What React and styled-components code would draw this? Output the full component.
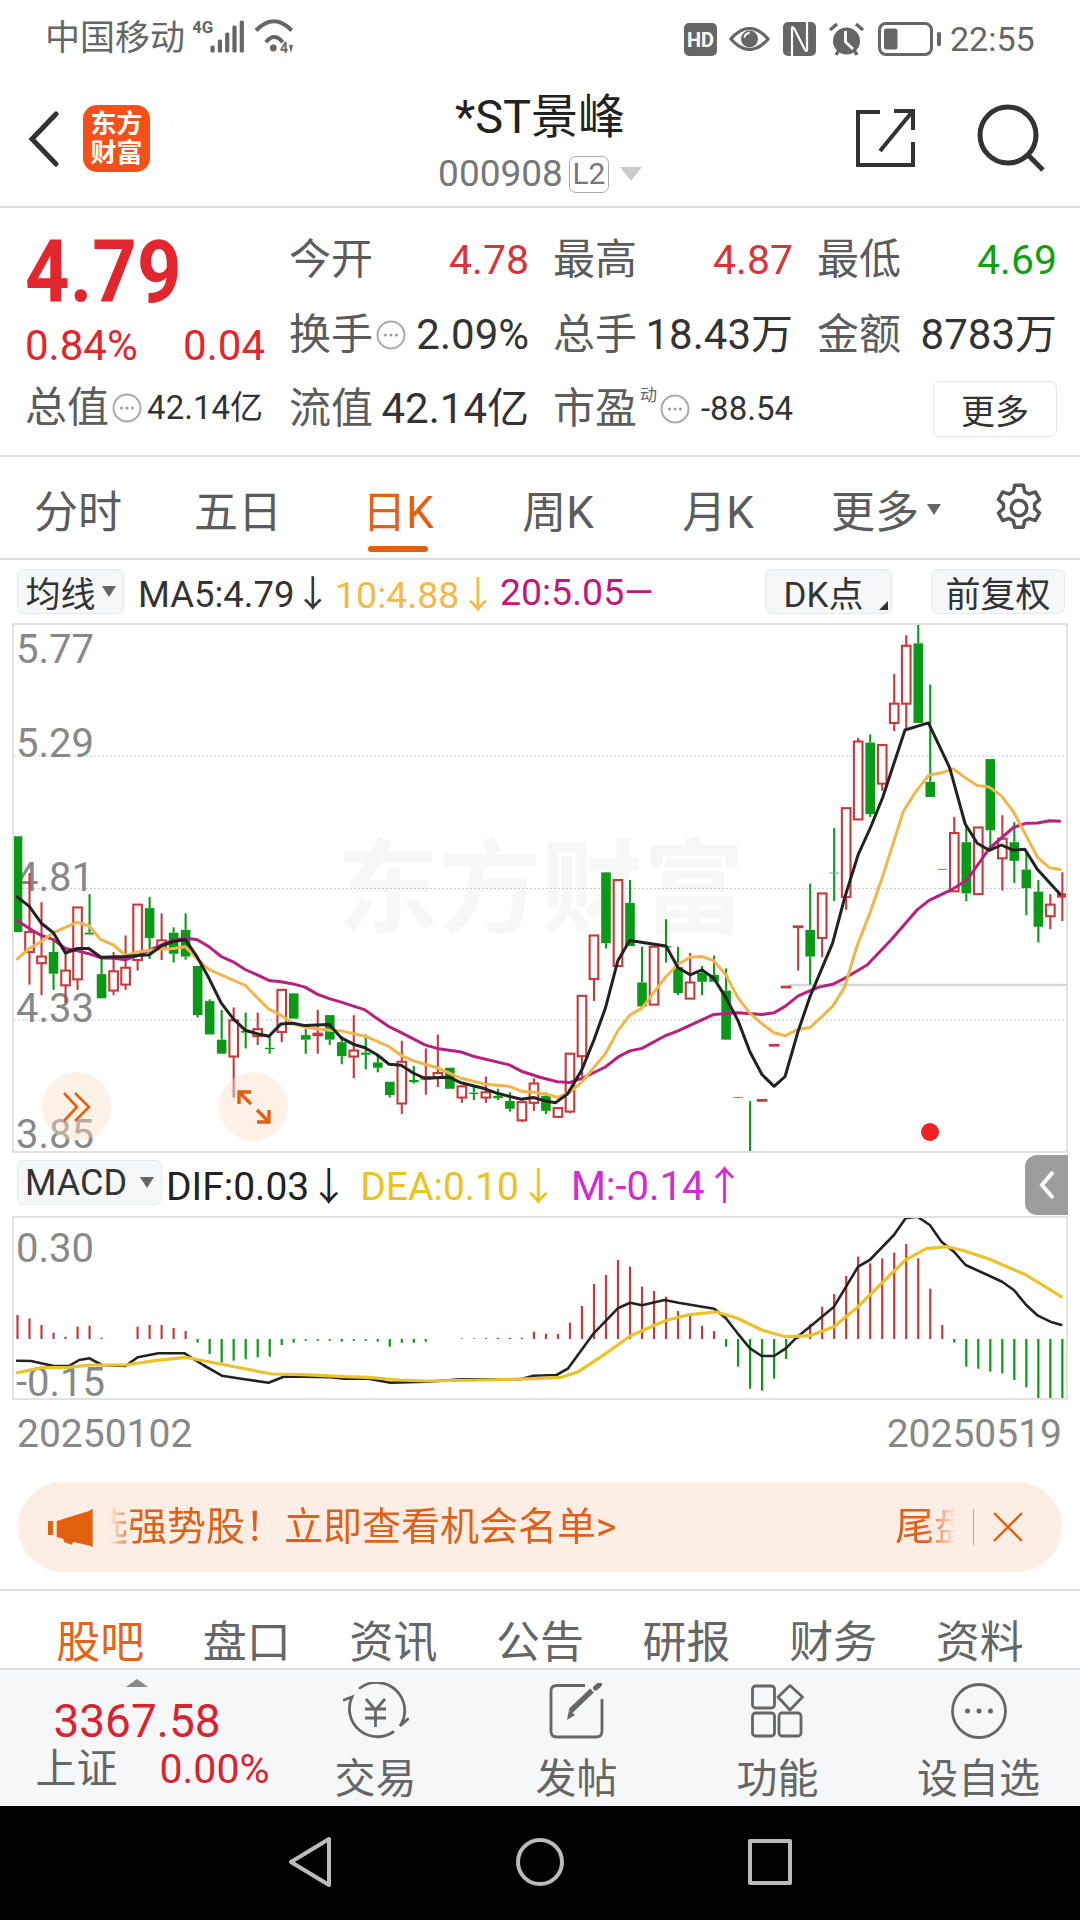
import styled, { createGlobalStyle } from "styled-components";

const GlobalStyle = createGlobalStyle`
  html, body {
    margin: 0;
    padding: 0;
    background: #fff;
  }
  * {
    box-sizing: border-box;
  }
`;

const FONT = `Roboto, "Noto Sans CJK SC", sans-serif`;
const RED = "#e1262d";
const ORANGE = "#e3600f";
const UP = "#c53b3b";
const DOWN = "#0a9a17";

// [high, bodyTop, bodyBottom, low, up?] measured from the reference, in crop units
const CANDLES = [
  [645, 645, 918, 918, 0], [750, 918, 975, 1068, 1], [833, 988, 1007, 1098, 1], [940, 975, 1037, 1083, 0],
  [970, 1028, 1070, 1120, 1], [848, 848, 1053, 1083, 1], [810, 920, 925, 925, 0], [995, 1038, 1107, 1107, 0],
  [975, 1030, 1085, 1098, 1], [928, 1020, 1068, 1083, 1], [840, 840, 998, 1028, 1], [818, 850, 935, 995, 0],
  [865, 942, 965, 998, 1], [905, 920, 980, 1005, 0], [865, 912, 988, 997, 0], [1015, 1015, 1155, 1162, 0],
  [1110, 1115, 1210, 1210, 0], [1140, 1225, 1265, 1265, 0], [1133, 1170, 1273, 1390, 1], [1148, 1200, 1205, 1250, 0],
  [1148, 1195, 1215, 1240, 1], [1215, 1248, 1252, 1265, 0], [1083, 1083, 1203, 1232, 1], [1093, 1093, 1165, 1165, 0],
  [1195, 1212, 1225, 1265, 0], [1140, 1208, 1212, 1265, 1], [1155, 1155, 1225, 1240, 0], [1215, 1232, 1272, 1295, 0],
  [1155, 1256, 1273, 1335, 1], [1210, 1262, 1268, 1310, 0], [1270, 1290, 1305, 1318, 0], [1345, 1345, 1383, 1390, 0],
  [1228, 1288, 1407, 1437, 1], [1300, 1340, 1346, 1350, 0], [1250, 1332, 1336, 1382, 1], [1210, 1320, 1332, 1360, 1],
  [1305, 1305, 1365, 1365, 0], [1358, 1358, 1390, 1405, 1], [1360, 1376, 1380, 1397, 0], [1330, 1375, 1390, 1405, 1],
  [1365, 1385, 1392, 1397, 0], [1375, 1400, 1422, 1430, 0], [1403, 1403, 1455, 1460, 1], [1335, 1350, 1405, 1428, 1],
  [1375, 1385, 1428, 1437, 0], [1420, 1420, 1445, 1445, 1], [1265, 1265, 1430, 1435, 1], [1100, 1100, 1272, 1330, 1],
  [928, 928, 1052, 1115, 1], [748, 748, 950, 965, 0], [770, 770, 1015, 1015, 1], [770, 835, 958, 958, 0],
  [960, 1062, 1130, 1138, 0], [960, 960, 1125, 1125, 1], [882, 958, 962, 1005, 0], [960, 1018, 1092, 1098, 0],
  [978, 1062, 1108, 1108, 1], [1015, 1035, 1060, 1098, 0], [985, 1040, 1060, 1060, 0], [1022, 1085, 1225, 1225, 0],
  [1390, 1389, 1391, 1390, 0], [1400, 1544, 1546, 1546, 0], [1398, 1397, 1399, 1398, 1], [1241, 1240, 1242, 1241, 1],
  [1075, 1074, 1076, 1075, 1], [903, 902, 904, 1028, 1], [780, 912, 988, 1068, 0], [808, 808, 935, 990, 1],
  [622, 749, 751, 830, 0], [565, 565, 818, 855, 1], [365, 375, 597, 597, 1], [355, 378, 582, 590, 0],
  [385, 385, 495, 515, 1], [182, 267, 322, 345, 1], [72, 102, 267, 340, 1], [40, 95, 322, 322, 0],
  [213, 490, 533, 533, 0], [738, 738, 740, 739, 0], [590, 636, 802, 802, 1], [615, 662, 808, 830, 0],
  [620, 620, 810, 810, 1], [425, 425, 628, 680, 0], [585, 652, 708, 800, 1], [605, 662, 715, 778, 0],
  [690, 740, 793, 870, 0], [770, 803, 903, 948, 0], [810, 840, 873, 910, 1], [748, 811, 817, 887, 1],
];

// moving averages: [x, y] crop units; right-hand points are shifted by the crop width
const R = (list) => list.map(([x, y]) => [x + 1568, y]);

const MA5 = [
  [50, 818], [85, 845], [120, 893], [155, 920], [190, 978], [225, 965], [258, 965], [293, 990], [365, 988], [400, 985],
  [434, 983], [468, 958], [503, 945], [538, 940], [573, 990], [607, 1050], [642, 1120], [677, 1165], [712, 1198],
  [747, 1208], [781, 1215], [816, 1180], [851, 1178], [886, 1185], [956, 1182], [991, 1220], [1026, 1238], [1060, 1248],
  [1095, 1268], [1130, 1295], [1165, 1298], [1200, 1320], [1234, 1335], [1304, 1332], [1339, 1348], [1409, 1365],
  [1444, 1378], [1514, 1395], [1549, 1390],
  ...R([[17, 1400], [45, 1405], [80, 1380], [122, 1310], [157, 1225], [190, 1135], [226, 1000], [261, 942], [366, 958],
    [401, 1020], [436, 1040], [471, 1026], [505, 1050], [540, 1105], [575, 1170], [610, 1260], [645, 1325], [680, 1358],
    [712, 1330], [750, 1200], [785, 1100], [850, 950], [885, 820], [925, 695], [960, 620], [995, 535], [1060, 342],
    [1128, 322], [1190, 450], [1235, 610], [1270, 665], [1305, 685], [1340, 670], [1375, 685], [1408, 682], [1445, 740],
    [1510, 810]]),
];

const MA10 = [
  [50, 995], [85, 965], [120, 945], [155, 920], [190, 905], [225, 890], [258, 900], [293, 940], [330, 955], [365, 985],
  [400, 975], [434, 970], [503, 965], [538, 960], [573, 995], [607, 1025], [642, 1040], [712, 1070], [747, 1105],
  [781, 1138], [816, 1155], [851, 1180], [886, 1190], [956, 1198], [991, 1200], [1060, 1215], [1130, 1245], [1165, 1270],
  [1200, 1285], [1269, 1305], [1339, 1335], [1409, 1352], [1479, 1358], [1514, 1372], [1549, 1375],
  ...R([[17, 1380], [52, 1390], [87, 1375], [122, 1345], [190, 1265], [226, 1200], [261, 1155], [296, 1135], [331, 1090],
    [366, 1045], [401, 1010], [436, 990], [471, 988], [505, 1000], [540, 1040], [575, 1105], [610, 1150], [645, 1180],
    [680, 1205], [712, 1214], [750, 1195], [785, 1190], [850, 1130], [885, 1075], [920, 960], [960, 860], [995, 760],
    [1055, 575], [1090, 520], [1130, 470], [1165, 465], [1200, 453], [1235, 478], [1270, 500], [1305, 505], [1340, 530],
    [1375, 575], [1410, 640], [1445, 705], [1480, 735], [1510, 740]]),
];

const MA20 = [
  [50, 885], [85, 908], [120, 928], [155, 940], [190, 965], [225, 972], [258, 980], [293, 992], [330, 993], [365, 997],
  [400, 985], [434, 970], [468, 955], [503, 942], [538, 935], [573, 940], [607, 960], [642, 988], [677, 1003], [712, 1025],
  [747, 1040], [781, 1056], [816, 1060], [851, 1066], [886, 1075], [921, 1095], [956, 1108], [991, 1118], [1060, 1140],
  [1095, 1165], [1130, 1188], [1165, 1205], [1234, 1240], [1269, 1250], [1339, 1260], [1374, 1272], [1479, 1297],
  [1514, 1315], [1568, 1332],
  ...R([[50, 1345], [87, 1347], [122, 1335], [190, 1303], [226, 1275], [261, 1257], [296, 1250], [361, 1215], [401, 1200],
    [505, 1153], [575, 1148], [645, 1153], [680, 1148], [712, 1130], [750, 1100], [785, 1085], [810, 1075], [850, 1067],
    [885, 1050], [950, 1012], [1020, 940], [1095, 855], [1130, 828], [1200, 795], [1240, 770], [1305, 680], [1375, 620],
    [1410, 608], [1445, 607], [1480, 601], [1510, 602]]),
];

const MACD_BARS = [
  72, 62, 42, 19, 7, 37, 40, 4, 0, 0, 37, 42, 42, 33, 24, -11, -45, -71, -65, -61, -55, -53, -18, -11, -5, -5, -5, -8, -5, -5,
  -8, -23, -11, -11, -8, 0, 0, 2, 2, 3, 3, 3, 4, 22, 16, 15, 49, 99, 165, 192, 237, 217, 157, 144, 127, 84, 77, 40, 24, -23,
  -83, -149, -155, -119, -60, 3, 45, 97, 135, 189, 247, 227, 242, 259, 285, 242, 151, 42, -11, -83, -89, -98, -103, -123,
  -145, -178, -181, -178,
];

const DIF = [
  [25, 632], [45, 633], [78, 648], [100, 648], [115, 630], [130, 625], [148, 645], [182, 648], [200, 622], [230, 610],
  [268, 610], [295, 645], [322, 677], [355, 688], [390, 698], [412, 680], [440, 680], [480, 682], [500, 686], [535, 686],
  [567, 698], [620, 695], [670, 688], [755, 688], [775, 677], [808, 675], [825, 655], [862, 550], [897, 475], [915, 458],
  [932, 466], [965, 450], [985, 458], [1037, 476], [1054, 505], [1071, 550], [1089, 595], [1106, 618], [1124, 618],
  [1141, 595], [1158, 560], [1176, 530], [1211, 470], [1246, 350], [1263, 330], [1298, 255], [1315, 205], [1332, 200],
  [1350, 225], [1367, 275], [1385, 305], [1402, 345], [1437, 378], [1455, 395], [1472, 420], [1490, 465], [1507, 497],
  [1525, 515], [1541, 525],
];

const DEA = [
  [25, 668], [60, 653], [100, 652], [130, 645], [182, 645], [225, 632], [270, 622], [295, 632], [340, 650], [395, 672],
  [440, 674], [500, 680], [535, 682], [580, 690], [620, 693], [700, 690], [775, 686], [815, 682], [840, 665], [880, 610],
  [915, 558], [965, 513], [1000, 494], [1040, 486], [1071, 505], [1106, 540], [1141, 560], [1176, 557], [1211, 530],
  [1246, 470], [1280, 400], [1315, 330], [1345, 296], [1375, 290], [1400, 302], [1437, 328], [1490, 375], [1541, 440],
];

const candleX = (i) => 17.5 + 12.01 * i;
const kX = (v) => v / 2.904;
const kY = (v) => 610 + v / 2.851;
const kPoints = (list) => list.map(([x, y]) => `${kX(x).toFixed(1)},${kY(y).toFixed(1)}`).join(" ");
const mPoints = (list) => list.map(([x, y]) => `${(x / 1.452).toFixed(1)},${(1150 + y / 3).toFixed(1)}`).join(" ");

const Page = styled.div`
  width: 1080px;
  height: 1920px;
  display: flex;
  flex-direction: column;
  overflow: hidden;
  background: #fff;
  font-family: ${FONT};
  color: #555;
`;

const StatusBar = styled.div`
  height: 75px;
  flex: none;
  display: flex;
  align-items: center;
  padding: 3px 38px 0 45px;
  color: #666;
`;

const Carrier = styled.span`
  font-size: 35px;
  line-height: 40px;
`;

const StatusLeft = styled.div`
  display: flex;
  align-items: center;
  gap: 8px;
`;

const StatusRight = styled.div`
  margin-left: auto;
  display: flex;
  align-items: center;
  gap: 12.5px;
`;

const Clock = styled.span`
  font-size: 34px;
  margin-left: -3px;
  width: 92px;
`;

const Header = styled.div`
  height: 133px;
  flex: none;
  display: grid;
  grid-template-columns: 1fr auto 1fr;
  border-bottom: 2px solid #ddd;
`;

const HeaderLeft = styled.div`
  display: flex;
  align-items: center;
  gap: 23px;
  padding: 0 0 4px 28px;
`;

const Logo = styled.div`
  width: 67px;
  height: 67px;
  border-radius: 14px;
  background: #f4511a;
  color: #fff;
  font-size: 26px;
  font-weight: 700;
  line-height: 29px;
  display: flex;
  align-items: center;
  justify-content: center;
  text-align: center;
`;

const HeaderCenter = styled.div`
  display: flex;
  flex-direction: column;
  align-items: center;
  padding-top: 14px;
`;

const Title = styled.div`
  font-size: 47px;
  line-height: 56px;
  color: #222;
`;

const CodeRow = styled.div`
  display: flex;
  align-items: center;
  margin-top: 9px;
  font-size: 37px;
  line-height: 40px;
  color: #777;
`;

const LevelBadge = styled.span`
  width: 40px;
  height: 37px;
  margin-left: 6px;
  border: 1.5px solid #aaa;
  border-radius: 7px;
  font-size: 30px;
  line-height: 34px;
  text-align: center;
`;

const CodeCaret = styled.span`
  width: 0;
  height: 0;
  margin: 0 0 0 11px;
  border-left: 11px solid transparent;
  border-right: 11px solid transparent;
  border-top: 14px solid #ccc;
`;

const HeaderRight = styled.div`
  display: flex;
  align-items: center;
  justify-content: flex-end;
  gap: 61px;
  padding: 0 35px 5px 0;
`;

const Quote = styled.div`
  height: 249px;
  flex: none;
  display: flex;
  padding-left: 25px;
  border-bottom: 2px solid #ddd;
`;

const PriceColumn = styled.div`
  width: 264px;
  padding-top: 20px;
  flex: none;
`;

const Price = styled.div`
  font-size: 88px;
  line-height: 88px;
  font-weight: 700;
  color: ${RED};
  transform: scaleX(0.885);
  transform-origin: left center;
`;

const ChangeRow = styled.div`
  width: 240px;
  margin-top: 6px;
  display: flex;
  justify-content: space-between;
  font-size: 42px;
  line-height: 48px;
  color: ${RED};
`;

const CapRow = styled.div`
  width: 238px;
  margin-top: 14px;
  display: flex;
  align-items: center;
  justify-content: space-between;
`;

const StatsGrid = styled.div`
  display: grid;
  grid-template-columns: repeat(3, 240px);
  grid-auto-rows: 74.5px;
  column-gap: 24px;
  padding-top: 15px;
`;

const Stat = styled.div`
  display: flex;
  align-items: center;
  justify-content: space-between;
`;

const LabelGroup = styled.div`
  display: flex;
  align-items: center;
  gap: 3px;
`;

const Label = styled.span`
  font-size: 42px;
  line-height: 48px;
  color: #5c5c5c;
  white-space: nowrap;
`;

const Sup = styled.sup`
  font-size: 17px;
  line-height: 17px;
  align-self: flex-start;
  margin: 2px 0 0 0;
  color: #666;
`;

const Value = styled.span`
  font-size: ${(p) => p.$size || 42}px;
  line-height: 48px;
  color: ${(p) => p.$color || "#333"};
  white-space: nowrap;
`;

const MoreButton = styled.button`
  justify-self: end;
  align-self: center;
  width: 124px;
  height: 56px;
  padding: 0;
  background: #fff;
  border: 1.5px solid #e6e6e6;
  border-radius: 7px;
  font-family: ${FONT};
  font-size: 34px;
  color: #333;
`;

const Tabs = styled.div`
  height: 103px;
  flex: none;
  display: flex;
  align-items: center;
  margin-left: -2px;
  border-bottom: 2px solid #ddd;
`;

const Tab = styled.div`
  position: relative;
  width: 160px;
  height: 100%;
  display: flex;
  align-items: center;
  justify-content: center;
  padding-top: 3px;
  font-size: 44px;
  color: ${(p) => (p.$active ? ORANGE : "#5c5c5c")};

  ${(p) =>
    p.$active &&
    `&::after {
      content: "";
      position: absolute;
      left: 50%;
      bottom: 6px;
      width: 60px;
      height: 6px;
      margin-left: -30px;
      border-radius: 3px;
      background: ${ORANGE};
    }`}
`;

const TabMenu = styled(Tab)`
  width: 176px;
  gap: 8px;
`;

const SmallCaret = styled.span`
  width: 0;
  height: 0;
  border-left: 7px solid transparent;
  border-right: 7px solid transparent;
  border-top: 11px solid ${(p) => p.$color || "#666"};
`;

const GearWrap = styled.div`
  margin-left: 19px;
  display: flex;
`;

const LegendRow = styled.div`
  height: 63px;
  flex: none;
  display: flex;
  align-items: center;
  padding: 0 15px 0 17px;
`;

const Chip = styled.div`
  position: relative;
  height: 45px;
  flex: none;
  width: ${(p) => p.$w}px;
  margin-left: ${(p) => p.$ml || 0}px;
  padding-right: ${(p) => p.$pr || 0}px;
  display: flex;
  align-items: center;
  justify-content: center;
  gap: 6px;
  background: #f6f7f9;
  border: 1.5px solid #e8e9ed;
  border-radius: 7px;
  font-size: 35px;
  color: #333;
  white-space: nowrap;
`;

const MacdChip = styled(Chip)`
  font-size: 36px;
  gap: 13px;
`;

const CornerMark = styled.span`
  position: absolute;
  right: 3px;
  bottom: 3px;
  width: 0;
  height: 0;
  border-left: 9px solid transparent;
  border-bottom: 9px solid #333;
`;

const LegendText = styled.span`
  font-size: ${(p) => p.$size || 36.5}px;
  color: ${(p) => p.$color};
  margin-left: ${(p) => p.$ml || 0}px;
  white-space: nowrap;
`;

const LegendEnd = styled.div`
  margin-left: auto;
  display: flex;
  align-items: center;
`;

const ChartFrame = styled.div`
  position: relative;
  flex: none;
  height: ${(p) => p.$h}px;
  margin: 0 12px;
  border: 2px solid #e2e2e2;
  line-height: 0;
`;

const FloatButton = styled.div`
  position: absolute;
  top: 447px;
  left: ${(p) => p.$left}px;
  width: 69px;
  height: 69px;
  border-radius: 50%;
  background: rgba(250, 222, 200, 0.42);
  display: flex;
  align-items: center;
  justify-content: center;
`;

const IndicatorRow = styled(LegendRow)`
  padding-right: 0;
  padding-bottom: 4px;
`;

const PanelHandle = styled.div`
  margin: 4px 12px 0 auto;
  width: 43px;
  height: 60px;
  background: #9d9d9d;
  border-radius: 12px 0 0 12px;
  display: flex;
  align-items: center;
  justify-content: center;
`;

const DateRow = styled.div`
  height: 82px;
  flex: none;
  display: flex;
  justify-content: space-between;
  align-items: center;
  padding: 0 18px 14px 17px;
  font-size: 39px;
  color: #888;
`;

const Banner = styled.div`
  height: 90px;
  flex: none;
  margin: 0 18px;
  display: flex;
  align-items: center;
  padding: 0 38px 0 29px;
  border-radius: 45px;
  background: #fdeee5;
  color: #e0601a;
`;

const Ticker = styled.div`
  width: ${(p) => p.$w}px;
  margin-left: ${(p) => p.$ml || 0}px;
  overflow: hidden;
  font-size: 39px;
  line-height: 50px;
  white-space: nowrap;
  mask-image: linear-gradient(
    to ${(p) => p.$fade},
    transparent,
    #000 ${(p) => p.$fadeAt}px
  );
`;

const TickerText = styled.span`
  display: inline-block;
  margin-left: ${(p) => p.$shift || 0}px;
`;

const BannerRule = styled.span`
  width: 1px;
  height: 36px;
  margin: 0 18px 0 17px;
  background: #c8a48e;
`;

const InfoTabs = styled.div`
  margin-top: 17px;
  height: 81px;
  flex: none;
  display: grid;
  grid-template-columns: repeat(7, 1fr);
  padding: 0 27px;
  border-top: 2px solid #ddd;
  border-bottom: 2px solid #ddd;
`;

const InfoTab = styled.div`
  display: flex;
  align-items: center;
  justify-content: center;
  padding-top: 16px;
  font-size: 44px;
  color: ${(p) => (p.$active ? "#e0651a" : "#666")};
`;

const BottomBar = styled.div`
  height: 136px;
  flex: none;
  display: flex;
  background: #f6f7f9;
`;

const IndexPanel = styled.div`
  width: 275px;
  flex: none;
  display: flex;
  flex-direction: column;
  align-items: center;
  padding-top: 9px;
  color: ${RED};
`;

const IndexCaret = styled.span`
  width: 0;
  height: 0;
  border-left: 11px solid transparent;
  border-right: 11px solid transparent;
  border-bottom: 8px solid #888;
  margin-left: -1px;
`;

const IndexValue = styled.div`
  font-size: 46px;
  line-height: 50px;
  margin: 9px 0 0 -1px;
  color: #d9232e;
`;

const IndexRow = styled.div`
  display: flex;
  gap: 42px;
  margin-left: 30px;
  font-size: 41px;
  line-height: 46px;
  color: #d9232e;
`;

const IndexName = styled.span`
  color: #666;
`;

const BarItem = styled.div`
  width: 201px;
  flex: none;
  display: flex;
  flex-direction: column;
  align-items: center;
  padding-top: 11px;
  font-size: 41px;
  line-height: 46px;
  color: #666;
`;

const BarIcon = styled.div`
  height: 60px;
  margin-bottom: 15px;
  display: flex;
  align-items: center;
`;

const SystemNav = styled.div`
  flex: 1;
  background: #000;
  display: flex;
  align-items: center;
  justify-content: center;
  padding-bottom: 2px;
`;

const NavSlot = styled.div`
  width: 230px;
  display: flex;
  justify-content: center;
`;

const Dots = () => (
  <svg width="30" height="30" viewBox="0 0 30 30" style={{ flex: "none" }}>
    <circle cx="15" cy="15" r="13.5" fill="none" stroke="#aaa" strokeWidth="2" />
    <circle cx="9.5" cy="15" r="1.5" fill="#999" />
    <circle cx="15" cy="15" r="1.5" fill="#999" />
    <circle cx="20.5" cy="15" r="1.5" fill="#999" />
  </svg>
);

const Signal = () => (
  <svg width="104" height="42" viewBox="0 0 104 42" fill="#666">
    <text x="-1" y="15" fontSize="17" fontWeight="700" fontFamily="Roboto, sans-serif">4G</text>
    {[7, 13, 20, 27, 32].map((h, i) => (
      <rect key={h} x={17.5 + i * 7.3} y={34.5 - h} width="4.2" height={h} rx="1.5" />
    ))}
    <g fill="none" stroke="#666" strokeWidth="4">
      <path d="M63 12.5 Q81 -6 98.7 12.5" />
      <path d="M73 24.2 Q81 14 89.7 24.2" />
    </g>
    <circle cx="80.3" cy="30" r="3.4" />
    <text x="87" y="35" fontSize="14" fontWeight="700" fontFamily="Roboto, sans-serif">4</text>
    <path d="M96 27 H100 L98 35 Z" />
  </svg>
);

const HdIcon = () => (
  <svg width="33" height="33" viewBox="0 0 33 33">
    <rect width="33" height="33" rx="5" fill="#666" />
    <text x="16.5" y="24" textAnchor="middle" fontSize="20" fontWeight="700" fill="#fff" fontFamily="Roboto, sans-serif" textLength="27" lengthAdjust="spacingAndGlyphs">HD</text>
  </svg>
);

const EyeIcon = () => (
  <svg width="41" height="24" viewBox="0 0 41 24">
    <path d="M1.8 12 Q20.5 -9 39.2 12 Q20.5 33 1.8 12 Z" fill="none" stroke="#666" strokeWidth="3.2" strokeLinejoin="round" />
    <circle cx="20.5" cy="12" r="8.5" fill="#666" />
    <path d="M15.5 10 Q16.5 6.5 20 6" fill="none" stroke="#fff" strokeWidth="1.8" strokeLinecap="round" />
  </svg>
);

const NfcIcon = () => (
  <svg width="33" height="34" viewBox="0 0 33 34">
    <rect width="33" height="34" rx="5" fill="#666" />
    <path d="M9 34 V7 Q9 3 11.5 7 L21.5 27 Q24 31 24 27 V0" fill="none" stroke="#fff" strokeWidth="2.2" />
  </svg>
);

const AlarmIcon = () => (
  <svg width="37" height="34" viewBox="0 0 37 34">
    <circle cx="18.5" cy="19" r="13.5" fill="#666" />
    <path d="M17.5 9 V20 L25 27" fill="none" stroke="#fff" strokeWidth="2.8" />
    <path d="M2 8 L9 2 M35 8 L28 2 M8 33 L11 28 M29 33 L26 28" stroke="#666" strokeWidth="3.4" />
  </svg>
);

const BatteryIcon = () => (
  <svg width="63" height="34" viewBox="0 0 63 34">
    <rect x="1.5" y="1.5" width="52" height="31" rx="6.5" fill="none" stroke="#666" strokeWidth="3" />
    <rect x="6" y="6.5" width="13.5" height="21" rx="2.5" fill="#666" />
    <rect x="59" y="10" width="4" height="14" rx="1.5" fill="#666" />
  </svg>
);

const BackIcon = () => (
  <svg width="32" height="56" viewBox="0 0 32 56">
    <path d="M28 3 L4 28 L28 53" fill="none" stroke="#333" strokeWidth="5" strokeLinecap="round" />
  </svg>
);

const ShareIcon = () => (
  <svg width="60" height="60" viewBox="0 0 60 60">
    <path d="M24 4 H2 V57 H57 V34" fill="none" stroke="#333" strokeWidth="4" />
    <path d="M24 43 L56 4 M38 3 H57 V22" fill="none" stroke="#333" strokeWidth="4" />
  </svg>
);

const SearchIcon = () => (
  <svg width="68" height="68" viewBox="0 0 68 68">
    <circle cx="31" cy="31" r="28" fill="none" stroke="#333" strokeWidth="5" />
    <path d="M51 51 L66 66" stroke="#333" strokeWidth="5" />
  </svg>
);

const GearIcon = () => (
  <svg width="52" height="52" viewBox="0 0 24 24" fill="none" stroke="#555" strokeWidth="1.6" strokeLinejoin="round">
    <path d="M10 1.5 h4 l.6 3 2 1.1 2.9-1 2 3.5-2.3 2 v2.2 l2.3 2-2 3.5-2.9-1-2 1.1-.6 3 h-4 l-.6-3-2-1.1-2.9 1-2-3.5 2.3-2 v-2.2 l-2.3-2 2-3.5 2.9 1 2-1.1 z" />
    <circle cx="12" cy="12" r="3.6" />
  </svg>
);

const Megaphone = () => (
  <svg width="46" height="41" viewBox="0 0 46 41" fill={ORANGE} style={{ flex: "none" }}>
    <rect x="1" y="14" width="5" height="14" />
    <path d="M9.7 14 L41.3 4.3 L45.7 1.7 V40 L41.3 38.3 L26.3 35 L24.7 37.7 L17 35 L16.3 31.7 L9.7 30 Z" />
  </svg>
);

const CandleChart = () => (
  <svg width="1052" height="526" viewBox="14 625 1052 526" fontFamily="Roboto, sans-serif">
    <text x="337" y="925" fontSize="102" fontWeight="700" fill="#f7f7f7" fontFamily={`"Noto Sans CJK SC", sans-serif`}>
      东方财富
    </text>
    {[756, 888.5, 1020].map((y) => (
      <line key={y} x1="14" x2="1066" y1={y} y2={y} stroke="#ccc" strokeWidth="1" strokeDasharray="2 2" />
    ))}
    <line x1="788" x2="1066" y1="985" y2="985" stroke="#d5d8dd" strokeWidth="2.5" />
    <g fontSize="40" fill="#888">
      <text x="16" y="663">5.77</text>
      <text x="16" y="757">5.29</text>
      <text x="16" y="891">4.81</text>
      <text x="16" y="1022">4.33</text>
      <text x="16" y="1148">3.85</text>
    </g>
    {CANDLES.map(([hi, top, bottom, lo, up], i) => {
      const x = candleX(i);
      const color = up ? UP : DOWN;
      return (
        <g key={i}>
          <line x1={x} x2={x} y1={kY(hi)} y2={kY(top)} stroke={color} strokeWidth="2.1" />
          <line x1={x} x2={x} y1={kY(bottom)} y2={kY(lo)} stroke={color} strokeWidth="2.1" />
          {up ? (
            <rect x={x - 4.3} y={kY(top)} width="8.6" height={kY(bottom) - kY(top)} fill="#fff" stroke={color} strokeWidth="2.1" />
          ) : (
            <rect x={x - 4.8} y={kY(top)} width="9.6" height={kY(bottom) - kY(top)} fill={color} />
          )}
        </g>
      );
    })}
    <g fill="none" strokeWidth="3" strokeLinejoin="round" strokeLinecap="round">
      <polyline points={kPoints(MA20)} stroke="#b8207f" />
      <polyline points={kPoints(MA10)} stroke="#f0b64c" />
      <polyline points={kPoints(MA5)} stroke="#222" />
    </g>
    <circle cx="930" cy="1132" r="9" fill="#ee2222" />
  </svg>
);

const MacdChart = () => (
  <svg width="1052" height="180" viewBox="14 1218 1052 180" fontFamily="Roboto, sans-serif">
    <g fontSize="40" fill="#888">
      <text x="16" y="1262">0.30</text>
      <text x="16" y="1396">-0.15</text>
    </g>
    {MACD_BARS.map((v, i) => {
      const x = candleX(i);
      const base = 1339;
      return <line key={i} x1={x} x2={x} y1={base} y2={base - v / 3} stroke={v >= 0 ? UP : DOWN} strokeWidth="2.2" />;
    })}
    <g fill="none" strokeLinejoin="round" strokeLinecap="round">
      <polyline points={mPoints(DIF)} stroke="#222" strokeWidth="2.6" />
      <polyline points={mPoints(DEA)} stroke="#edc12a" strokeWidth="3.2" />
    </g>
  </svg>
);

const TradeIcon = () => (
  <svg width="66" height="58" viewBox="0 0 66 58" fill="none" stroke="#666" strokeWidth="2.8" strokeLinecap="round">
    <path d="M17 6 A28 28 0 0 1 57 44 L65 37" />
    <path d="M50 50 A28 28 0 0 1 9 15 L1 18" />
    <path d="M23 17 L32.5 28 L42 17 M32.5 28 V45 M22 27 H43 M22 36 H43" strokeLinecap="butt" />
  </svg>
);

const PostIcon = () => (
  <svg width="56" height="56" viewBox="0 0 56 56" fill="none" stroke="#666" strokeWidth="2.8">
    <path d="M36 2.5 H8 Q2 2.5 2 8 V48 Q2 54 8 54 H47 Q53 54 53 48 V16" />
    <path d="M21.5 28 L43 7.5" strokeWidth="5.4" />
    <path d="M46.5 5 L50.5 1.5" strokeWidth="5" strokeLinecap="round" />
    <path d="M18 37 L20 27 L26 32 Z" fill="#666" stroke="none" />
  </svg>
);

const ToolsIcon = () => (
  <svg width="54" height="54" viewBox="0 0 54 54" fill="none" stroke="#666" strokeWidth="2.8" strokeLinejoin="round">
    <rect x="1.5" y="2" width="22" height="22" rx="3" />
    <path d="M39 1.5 L51.5 13 L39 26 L27 13 Z" />
    <rect x="1.5" y="29" width="22" height="23" rx="3" />
    <rect x="28" y="29" width="22" height="23" rx="3" />
  </svg>
);

const MoreIcon = () => (
  <svg width="56" height="56" viewBox="0 0 56 56">
    <circle cx="28" cy="28" r="26.5" fill="none" stroke="#666" strokeWidth="2.8" />
    <circle cx="16.5" cy="28" r="2.5" fill="#666" />
    <circle cx="28" cy="28" r="2.5" fill="#666" />
    <circle cx="39.5" cy="28" r="2.5" fill="#666" />
  </svg>
);

const STATS = [
  { label: "今开", value: "4.78", color: "#d8353a", size: 41 },
  { label: "最高", value: "4.87", color: "#d8353a", size: 41 },
  { label: "最低", value: "4.69", color: "#12a012", size: 41 },
  { label: "换手", dots: true, value: "2.09%" },
  { label: "总手", value: "18.43万" },
  { label: "金额", value: "8783万" },
  { label: "流值", value: "42.14亿" },
  { label: "市盈", sup: "动", dots: true, value: "-88.54", size: 33 },
];

const CHART_TABS = ["分时", "五日", "日K", "周K", "月K"];
const INFO_TABS = ["股吧", "盘口", "资讯", "公告", "研报", "财务", "资料"];

const BAR_ITEMS = [
  { label: "交易", icon: <TradeIcon /> },
  { label: "发帖", icon: <PostIcon /> },
  { label: "功能", icon: <ToolsIcon /> },
  { label: "设自选", icon: <MoreIcon /> },
];

const App = () => {
  return (
    <Page>
      <GlobalStyle />
      <StatusBar>
        <StatusLeft>
          <Carrier>中国移动</Carrier>
          <Signal />
        </StatusLeft>
        <StatusRight>
          <HdIcon />
          <EyeIcon />
          <NfcIcon />
          <AlarmIcon />
          <BatteryIcon />
          <Clock>22:55</Clock>
        </StatusRight>
      </StatusBar>

      <Header>
        <HeaderLeft>
          <BackIcon />
          <Logo>
            东方
            <br />
            财富
          </Logo>
        </HeaderLeft>
        <HeaderCenter>
          <Title>*ST景峰</Title>
          <CodeRow>
            000908
            <LevelBadge>L2</LevelBadge>
            <CodeCaret />
          </CodeRow>
        </HeaderCenter>
        <HeaderRight>
          <ShareIcon />
          <SearchIcon />
        </HeaderRight>
      </Header>

      <Quote>
        <PriceColumn>
          <Price>4.79</Price>
          <ChangeRow>
            <span>0.84%</span>
            <span>0.04</span>
          </ChangeRow>
          <CapRow>
            <LabelGroup>
              <Label>总值</Label>
              <Dots />
            </LabelGroup>
            <Value $size={33}>42.14亿</Value>
          </CapRow>
        </PriceColumn>
        <StatsGrid>
          {STATS.map((s) => (
            <Stat key={s.label}>
              <LabelGroup>
                <Label>{s.label}</Label>
                {s.sup && <Sup>{s.sup}</Sup>}
                {s.dots && <Dots />}
              </LabelGroup>
              <Value $color={s.color} $size={s.size}>
                {s.value}
              </Value>
            </Stat>
          ))}
          <MoreButton>更多</MoreButton>
        </StatsGrid>
      </Quote>

      <Tabs>
        {CHART_TABS.map((t) => (
          <Tab key={t} $active={t === "日K"}>
            {t}
          </Tab>
        ))}
        <TabMenu>
          更多
          <SmallCaret />
        </TabMenu>
        <GearWrap>
          <GearIcon />
        </GearWrap>
      </Tabs>

      <LegendRow>
        <Chip $w={107}>
          均线
          <SmallCaret />
        </Chip>
        <LegendText $color="#333" $ml={14}>MA5:4.79↓</LegendText>
        <LegendText $color="#f3b94a" $size={37.5} $ml={4}>10:4.88↓</LegendText>
        <LegendText $color="#c2187e" $size={37.5} $ml={3}>20:5.05—</LegendText>
        <LegendEnd>
          <Chip $w={127} $pr={10}>
            DK点
            <CornerMark />
          </Chip>
          <Chip $w={134} $ml={39}>前复权</Chip>
        </LegendEnd>
      </LegendRow>

      <ChartFrame $h={530}>
        <CandleChart />
        <FloatButton $left={28}>
          <svg width="30" height="32" viewBox="0 0 30 32" fill="none" stroke={ORANGE} strokeWidth="2.6">
            <path d="M2 2 L15 16 L2 30 M13 2 L27 16 L13 30" />
          </svg>
        </FloatButton>
        <FloatButton $left={205}>
          <svg width="36" height="36" viewBox="0 0 36 36" fill="none" stroke={ORANGE} strokeWidth="3.4">
            <path d="M3 15 V3 H15 M3 3 L15 15 M33 21 V33 H21 M33 33 L21 21" />
          </svg>
        </FloatButton>
      </ChartFrame>

      <IndicatorRow>
        <MacdChip $w={145}>
          MACD
          <SmallCaret />
        </MacdChip>
        <LegendText $color="#222" $size={39} $ml={4}>DIF:0.03↓</LegendText>
        <LegendText $color="#eec21c" $size={39} $ml={12}>DEA:0.10↓</LegendText>
        <LegendText $color="#d12bd1" $size={40} $ml={13}>M:-0.14↑</LegendText>
        <PanelHandle>
          <svg width="18" height="30" viewBox="0 0 18 30" fill="none" stroke="#fff" strokeWidth="4">
            <path d="M15 2 L4 15 L15 28" />
          </svg>
        </PanelHandle>
      </IndicatorRow>

      <ChartFrame $h={184}>
        <MacdChart />
      </ChartFrame>

      <DateRow>
        <span>20250102</span>
        <span>20250519</span>
      </DateRow>

      <Banner>
        <Megaphone />
        <Ticker $w={550} $ml={17} $fade="right" $fadeAt={24}>
          <TickerText $shift={-21}>选强势股！立即查看机会名单&gt;</TickerText>
        </Ticker>
        <Ticker $w={61} $ml={236} $fade="left" $fadeAt={30}>
          <TickerText>尾盘选股</TickerText>
        </Ticker>
        <BannerRule />
        <svg width="32" height="32" viewBox="0 0 32 32" fill="none" stroke={ORANGE} strokeWidth="2.4">
          <path d="M2 2 L30 30 M30 2 L2 30" />
        </svg>
      </Banner>

      <InfoTabs>
        {INFO_TABS.map((t) => (
          <InfoTab key={t} $active={t === "股吧"}>
            {t}
          </InfoTab>
        ))}
      </InfoTabs>

      <BottomBar>
        <IndexPanel>
          <IndexCaret />
          <IndexValue>3367.58</IndexValue>
          <IndexRow>
            <IndexName>上证</IndexName>
            <span>0.00%</span>
          </IndexRow>
        </IndexPanel>
        {BAR_ITEMS.map((item) => (
          <BarItem key={item.label}>
            <BarIcon>{item.icon}</BarIcon>
            {item.label}
          </BarItem>
        ))}
      </BottomBar>

      <SystemNav>
        <NavSlot>
          <svg width="44" height="52" viewBox="0 0 44 52" fill="none" stroke="#bbb" strokeWidth="4" strokeLinejoin="round">
            <path d="M41 3 V49 L3 26 Z" />
          </svg>
        </NavSlot>
        <NavSlot>
          <svg width="48" height="48" viewBox="0 0 48 48" fill="none" stroke="#bbb" strokeWidth="4">
            <circle cx="24" cy="24" r="22" />
          </svg>
        </NavSlot>
        <NavSlot>
          <svg width="44" height="46" viewBox="0 0 44 46" fill="none" stroke="#bbb" strokeWidth="4" strokeLinejoin="round">
            <rect x="2" y="2" width="40" height="42" />
          </svg>
        </NavSlot>
      </SystemNav>
    </Page>
  );
};

export default App;
